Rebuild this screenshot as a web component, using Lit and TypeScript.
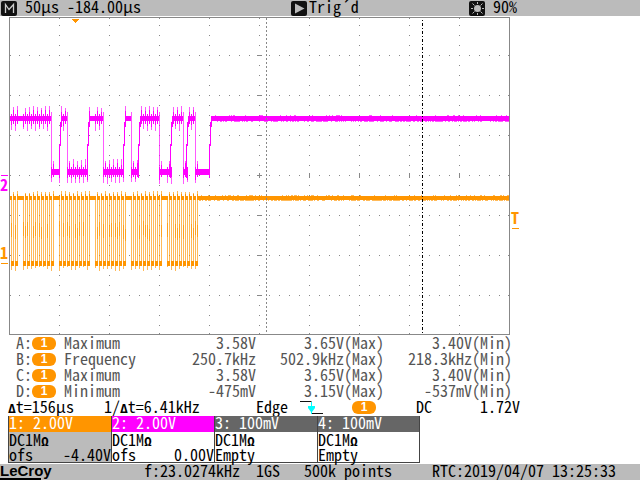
import { LitElement, html, svg, css } from "lit";
import { customElement } from "lit/decorators.js";

interface Reading { id: string; name: string; value: string; max: string; min: string }
interface Channel { key: string; scale: string; coupling: string; left: string; right: string }

const READINGS: Reading[] = [
  { id: "A:", name: "Maximum", value: "3.58V", max: "3.65V(Max)", min: "3.40V(Min)" },
  { id: "B:", name: "Frequency", value: "250.7kHz", max: "502.9kHz(Max)", min: "218.3kHz(Min)" },
  { id: "C:", name: "Maximum", value: "3.58V", max: "3.65V(Max)", min: "3.40V(Min)" },
  { id: "D:", name: "Minimum", value: "-475mV", max: "3.15V(Max)", min: "-537mV(Min)" },
];

const CHANNELS: Channel[] = [
  { key: "one", scale: "1: 2.00V", coupling: "DC1M", left: "ofs", right: "-4.40V" },
  { key: "two", scale: "2: 2.00V", coupling: "DC1M", left: "ofs", right: "0.00V" },
  { key: "off", scale: "3: 100mV", coupling: "DC1M", left: "Empty", right: "" },
  { key: "off", scale: "4: 100mV", coupling: "DC1M", left: "Empty", right: "" },
];

const box = (x: number, y: number, w: number, h: number) => `M${x} ${y}h${w}v${h}h${-w}z`;

// Small repeatable noise source for the ragged edges of the traces.
function noise(seed: number) {
  let s = seed;
  return () => ((s = (s * 1103515245 + 12345) % 2147483648) / 2147483648);
}

// Clock pulses: the tail of one byte, then five bytes of eight pulses each.
const PULSES: number[] = [11, 15];
for (let start = 23; start <= 167; start += 36) {
  for (let i = 0; i < 8; i++) PULSES.push(start + i * 4);
}

// Data line levels as [from, to, high].
const LEVELS: [number, number, boolean][] = [
  [10, 51, true], [51, 60, false], [61, 67, true], [67, 88, false], [89, 103, true],
  [103, 124, false], [125, 131, true], [131, 139, false], [140, 159, true],
  [159, 172, false], [172, 183, true], [183, 188, false], [188, 195, true],
  [195, 209, false], [211, 509, true],
];

function graticule(): string {
  let d = "";
  for (let x = 59; x < 509; x += 50) {
    d += box(x, 18, 1, 1);
    for (let y = 25; y < 334; y += 10) d += box(x, y, 1, 1);
    d += box(x, 173, 1, 5) + box(x, 333, 1, 1);
  }
  for (let y = 55; y < 334; y += 40) {
    for (let x = 19; x < 509; x += 10) d += box(x, y, 1, 1);
    d += box(257, y, 5, 1) + box(10, y, 1, 1) + box(508, y, 1, 1);
  }
  return d;
}

function dataTrace() {
  const rnd = noise(7);
  let solid = "", light = "";
  LEVELS.forEach(([a, b, high], i) => {
    const y = high ? 116 : 169;
    solid += box(a, y, b - a, high ? 5 : 6);
    if (i > 0) {
      if (high) solid += box(a - 1, 122, 1, 24) + box(a - 2, 144, 1, 34) + box(a, 119, 1, 8);
      else light += box(a, 112, 1, 66);
    }
    for (const p of PULSES) {
      if (p >= a && p < b) {
        light += box(p, y + 4, 1, 9 + Math.floor(rnd() * 3));
        solid += box(p, y + 5, 1, 3 + Math.floor(rnd() * 4)) + box(p, y - 2, 1, 2);
      }
      if (p + 2 >= a && p + 2 < b) {
        light += box(p + 2, y - 8 - Math.floor(rnd() * 3), 1, 11);
        solid += box(p + 2, y - 4 - Math.floor(rnd() * 3), 1, 6) + box(p + 2, y + 5, 1, 3);
      }
    }
  });
  for (let x = 213; x < 509; x++) {
    if (rnd() < 0.55) light += box(x, 121, 1, 1);
    if (rnd() < 0.12) light += box(x, 115, 1, 1);
  }
  return { solid, light };
}

function clockTrace() {
  const rnd = noise(21);
  let solid = "", light = "", faint = "";
  let from = 10;
  PULSES.forEach((p) => {
    solid += box(from, 196, p - from + 1, 4);
    solid += box(p, 261, 3, 5) + box(p + 2, 194, 1, 4);
    light += box(p, 197, 1, 70 + Math.floor(rnd() * 5));
    light += box(p + 2, 191 + Math.floor(rnd() * 3), 1, 73);
    const top = 221 + Math.floor(rnd() * 5);
    if (rnd() < 0.7) faint += box(p, top, 1, 14);
    if (rnd() < 0.4) faint += box(p + 2, top + 4, 1, 12);
    from = p + 2;
  });
  solid += box(from, 196, 509 - from, 4);
  for (let x = 199; x < 509; x++) {
    if (rnd() < 0.6) light += box(x, 200, 1, 1);
    if (rnd() < 0.25) light += box(x, 195, 1, 1);
  }
  return { solid, light, faint };
}

@customElement("scope-display")
export class ScopeDisplay extends LitElement {
  static styles = css`
    :host { display: block; }
    .plot { display: block; width: 100%; height: auto; shape-rendering: crispEdges; }
    .frame { fill: none; stroke: #888; }
    .grid { fill: #888; }
    .two { fill: #f0f; }
    .one { fill: #ff9500; }
    .light { opacity: 0.65; }
    .cursor-a { stroke: #888; stroke-dasharray: 2 2; }
    .cursor-b { stroke: #000; stroke-dasharray: 1 2 3 2; }
    .mark { font: bold 16px "Noto Sans Mono CJK JP", "Liberation Mono", monospace; }
  `;

  render() {
    const data = dataTrace();
    const clock = clockTrace();
    return html`
      <svg class="plot" viewBox="0 16 640 320" role="img" aria-label="Waveforms of channels 1 and 2">
        ${svg`
          <path class="grid" d=${graticule()}></path>
          <path class="two light" d=${data.light}></path>
          <path class="two" d=${data.solid}></path>
          <path class="one light" d=${clock.light}></path>
          <path class="one light" d=${clock.faint}></path>
          <path class="one" d=${clock.solid}></path>
          <rect class="frame" x="9.5" y="17.5" width="500" height="317"></rect>
          <path class="cursor-a" d="M266.5 18V334"></path>
          <path class="cursor-b" d="M422.5 20V334"></path>
          <path class="one" d="M72 19h7v1h-1v1h-1v1h-1v1h-1v-1h-1v-1h-1v-1h-1z"></path>
          <path class="two" d="M1 175h7v1h-7z"></path>
          <text class="two mark" x="0" y="191">2</text>
          <text class="one mark" x="0" y="259">1</text>
          <path class="one" d="M1 263h7v1h-7zM512 228h7v1h-7z"></path>
          <text class="one mark" x="511" y="224">T</text>
        `}
      </svg>
    `;
  }
}

@customElement("app-root")
export class AppRoot extends LitElement {
  static styles = css`
    :host {
      display: block;
      min-height: 100vh;
      background: #fff;
      color: #000;
      font: 16px/13px "Noto Sans Mono CJK JP", "DejaVu Sans Mono", monospace;
      white-space: nowrap;
    }
    .bar { background: #bbb; height: 16px; display: grid; }
    .top { grid-template-columns: 290fr 178fr 172fr; }
    .cell { display: flex; gap: 8px; padding-left: 1px; }
    .tight { gap: 2px; }
    .icon { display: block; width: 16px; height: 16px; flex: none; }
    .cells { display: grid; grid-template-columns: repeat(80, minmax(0, 1fr)); height: 16px; }
    .greek { font: bold 13px/13px "DejaVu Sans Mono", monospace; }
    .readings { width: 80%; table-layout: fixed; border-collapse: collapse; color: #555; }
    .readings th, .readings td { padding: 0; height: 16px; font-weight: 400; text-align: left; vertical-align: top; }
    .readings .num { text-align: right; }
    .c-id { width: 12.5%; }
    .c-name, .c-val { width: 18.75%; }
    .tag { display: flex; padding-left: 16px; }
    .pill {
      width: 24px; height: 13px; margin-top: 1px; border-radius: 6px; background: #ff9500;
      color: #fff; font: bold 12px/13px "Liberation Sans", sans-serif; text-align: center;
    }
    .c1 { grid-column: 2 / 14; }
    .c2 { grid-column: 14 / 33; }
    .c3 { grid-column: 33 / 38; }
    .c4 { grid-column: 38 / 45; padding-left: 4px; }
    .c5 { grid-column: 45 / 53; }
    .c6 { grid-column: 53 / 61; }
    .c7 { grid-column: 61 / 81; }
    .slope { display: block; width: 24px; height: 16px; }
    .channels { display: grid; grid-template-columns: repeat(4, minmax(0, 103fr)) 220fr; padding-left: 8px; height: 48px; }
    .channel { box-sizing: border-box; height: 47px; border: solid #444; border-width: 0 0 1px 1px; }
    .channel.last { border-right-width: 1px; }
    .head { color: #fff; background: #666; height: 16px; }
    .one .head { background: #ff9500; }
    .two .head { background: #f0f; }
    .one { background: #bbb; }
    .line { display: flex; justify-content: space-between; height: 15px; line-height: 15px; }
    .status { grid-template-columns: repeat(80, minmax(0, 1fr)); }
    .logo { grid-column: 1 / 8; font: bold 15px/14px "Liberation Sans", sans-serif; }
    .logo::after { content: ""; display: block; width: 41px; height: 2px; background: #000; }
    .s1 { grid-column: 19 / 33; }
    .s2 { grid-column: 33 / 39; }
    .s3 { grid-column: 39 / 55; }
    .s4 { grid-column: 55 / 81; }
  `;

  render() {
    return html`
      <header class="bar top">
        <div class="cell">
          <svg class="icon" viewBox="0 0 16 16" aria-hidden="true">
            <rect y="1" width="16" height="15" rx="2" fill="#111"></rect>
            <path d="M4.500 13V4.500L8 9.500L12.500 4.500V13" fill="none" stroke="#ccc" stroke-width="1.300"></path>
          </svg>
          <span>50μs -184.00μs</span>
        </div>
        <div class="cell tight">
          <svg class="icon" viewBox="0 0 16 16" aria-hidden="true">
            <rect y="1" width="16" height="15" rx="2" fill="#111"></rect>
            <path d="M4 3.500L13.500 8.500L4 13.500z" fill="#bbb"></path>
          </svg>
          <span>Trig´d</span>
        </div>
        <div class="cell">
          <svg class="icon" viewBox="0 0 16 16" aria-hidden="true">
            <rect y="1" width="16" height="15" rx="2" fill="#111"></rect>
            <circle cx="8.500" cy="8.500" r="3.500" fill="#bbb"></circle>
            <path d="M8.500 2v2M8.500 13v2M2 8.500h2M13 8.500h2M3.500 3.500l2 2M13.500 3.500l-2 2M3.500 13.500l2-2M13.500 13.500l-2-2" stroke="#bbb"></path>
          </svg>
          <span>90%</span>
        </div>
      </header>
      <scope-display></scope-display>
      <table class="readings" aria-label="Measurements">
        <colgroup><col class="c-id"><col class="c-name"><col class="c-val"><col><col></colgroup>
        <tbody>
          ${READINGS.map((r) => html`<tr>
            <th scope="row"><div class="tag">${r.id}<span class="pill">1</span></div></th>
            <td>${r.name}</td>
            <td class="num">${r.value}</td>
            <td class="num">${r.max}</td>
            <td class="num">${r.min}</td>
          </tr>`)}
        </tbody>
      </table>
      <div class="cells">
        <span class="c1"><span class="greek">Δ</span>t=156μs</span>
        <span class="c2">1/<span class="greek">Δ</span>t=6.41kHz</span>
        <span class="c3">Edge</span>
        <span class="c4"><svg class="slope" viewBox="0 0 24 16" role="img" aria-label="Falling edge">
          <path d="M0 1.500h11.500M12 13.500h11" stroke="#111" fill="none"></path>
          <path d="M11.500 2v12" stroke="#0ff"></path>
          <path d="M8 6h7v2l-3 4h-1l-3-4z" fill="#0ff"></path>
        </svg></span>
        <span class="c5"><div class="pill">1</div></span>
        <span class="c6">DC</span>
        <span class="c7">1.72V</span>
      </div>
      <div class="channels">
        ${CHANNELS.map((c, i) => html`<section class="channel ${c.key} ${i === 3 ? "last" : ""}">
          <div class="head">${c.scale}</div>
          <div class="line"><span>${c.coupling}<span class="greek">Ω</span></span></div>
          <div class="line"><span>${c.left}</span><span>${c.right}</span></div>
        </section>`)}
      </div>
      <footer class="bar status">
        <span class="logo">LeCroy</span>
        <span class="s1">f:23.0274kHz</span>
        <span class="s2">1GS</span>
        <span class="s3">500k points</span>
        <span class="s4">RTC:2019/04/07 13:25:33</span>
      </footer>
    `;
  }
}
